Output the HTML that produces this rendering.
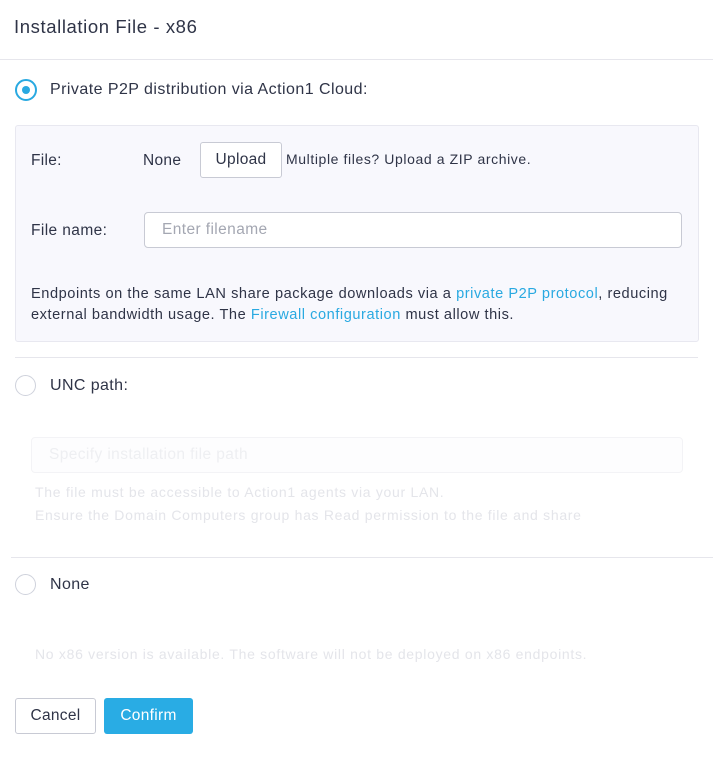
<!DOCTYPE html>
<html><head><style>
body{margin:0;width:713px;height:766px;background:#fff;font-family:"Liberation Sans",sans-serif;color:#2f3447;position:relative;overflow:hidden}
.a{position:absolute;white-space:nowrap}
.hr{position:absolute;height:1px;background:#e6e6ec}
.radio{position:absolute;width:19px;height:19px;border:1.5px solid #cfd2dc;border-radius:50%;background:#fff}
.radio.on{border:2px solid #29a9e1;width:18px;height:18px}
.radio.on:after{content:"";position:absolute;left:5px;top:5px;width:8px;height:8px;border-radius:50%;background:#29a9e1}
a{color:#29a9e1;text-decoration:none}
.btn{position:absolute;box-sizing:border-box;border-radius:3px;font-size:15.5px;letter-spacing:0.3px;display:flex;align-items:center;justify-content:center}
</style></head><body>
<div class="a" style="left:14px;top:16px;font-size:18.5px;letter-spacing:0.6px;color:#2f3447">Installation File - x86</div>
<div class="hr" style="left:0;top:59px;width:713px"></div>
<div class="radio on" style="left:15px;top:79px"></div>
<div class="a" style="left:50px;top:81px;font-size:16px;letter-spacing:0.45px">Private P2P distribution via Action1 Cloud:</div>
<div style="position:absolute;left:15px;top:125px;width:682px;height:215px;background:#f8f8fd;border:1px solid #e8e8f0;border-radius:3px"></div>
<div class="a" style="left:31px;top:152px;font-size:15.5px;letter-spacing:0.3px">File:</div>
<div class="a" style="left:143px;top:152px;font-size:15.5px;letter-spacing:0.3px">None</div>
<div class="btn" style="left:200px;top:142px;width:82px;height:36px;border:1px solid #c8cad4;background:#fff">Upload</div>
<div class="a" style="left:286px;top:151px;font-size:14px;letter-spacing:0.6px">Multiple files? Upload a ZIP archive.</div>
<div class="a" style="left:31px;top:222px;font-size:15.5px;letter-spacing:0.4px">File name:</div>
<div style="position:absolute;left:144px;top:212px;width:536px;height:34px;border:1px solid #c8cad4;border-radius:4px;background:#fff"></div>
<div class="a" style="left:162px;top:221px;font-size:15.5px;letter-spacing:0.4px;color:#a4a7b2">Enter filename</div>
<div class="a" style="left:31px;top:284px;font-size:14.6px;letter-spacing:0.55px;line-height:21px">Endpoints on the same LAN share package downloads via a <a>private P2P protocol</a>, reducing<br>external bandwidth usage. The <a>Firewall configuration</a> must allow this.</div>
<div class="hr" style="left:15px;top:357px;width:683px"></div>
<div class="radio" style="left:15px;top:375px"></div>
<div class="a" style="left:50px;top:377px;font-size:16px;letter-spacing:0.4px">UNC path:</div>
<div style="position:absolute;left:31px;top:437px;width:650px;height:34px;border:1px solid #f3f3f6;border-radius:4px;background:#fdfdfe"></div>
<div class="a" style="left:49px;top:446px;font-size:15.5px;letter-spacing:0.4px;color:#eeeff2">Specify installation file path</div>
<div class="a" style="left:35px;top:481px;font-size:14px;letter-spacing:0.7px;line-height:23px;color:#e4e5ea">The file must be accessible to Action1 agents via your LAN.<br>Ensure the Domain Computers group has Read permission to the file and share</div>
<div class="hr" style="left:11px;top:557px;width:702px"></div>
<div class="radio" style="left:15px;top:574px"></div>
<div class="a" style="left:50px;top:576px;font-size:16px;letter-spacing:0.4px">None</div>
<div class="a" style="left:35px;top:646px;font-size:14px;letter-spacing:0.7px;color:#e4e5ea">No x86 version is available. The software will not be deployed on x86 endpoints.</div>
<div class="btn" style="left:15px;top:698px;width:81px;height:36px;border:1px solid #c8cad4;background:#fff">Cancel</div>
<div class="btn" style="left:104px;top:698px;width:89px;height:36px;background:#29ace4;color:#fff">Confirm</div>
</body></html>
